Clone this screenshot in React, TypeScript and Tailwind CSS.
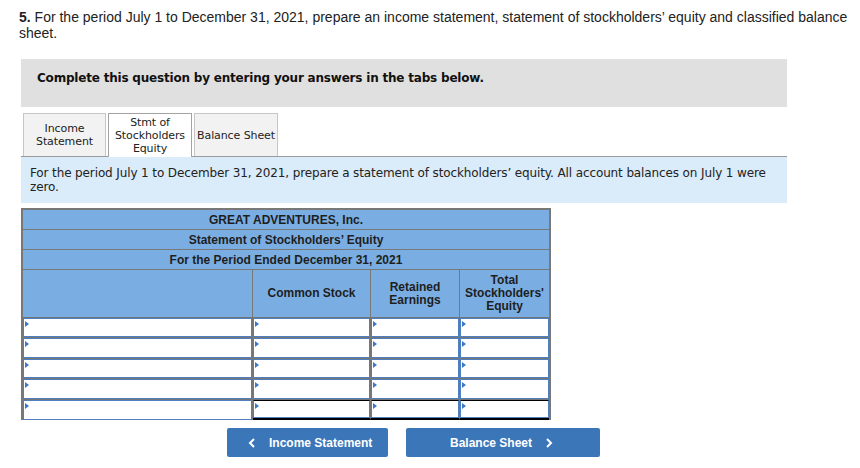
import React from "react";

const tahoma = { fontFamily: '"DejaVu Sans", Verdana, sans-serif' };
const arial = { fontFamily: '"Liberation Sans", Arial, sans-serif' };

function Flag() {
  return (
    <span className="absolute left-[1px] top-[2px] w-0 h-0 border-y-[3px] border-y-transparent border-l-[4px] border-l-[#3b78c8]" />
  );
}

function DataRow({ h, last }: { h: string; last?: boolean }) {
  const cols = [0, 1, 2, 3];
  return (
    <div className={`grid grid-cols-[230px_118px_89px_1fr] bg-white ${h}`}>
      {cols.map((c) => {
        const total = last && c > 0;
        return (
          <div
            key={c}
            className={`flex ${c < 3 ? "border-r border-r-[#767676]" : ""} ${
              last ? (total ? "border-b-2 border-b-black" : "") : "border-b border-b-[#767676]"
            }`}
          >
            <div
              className={`relative flex-1 border border-[#4f7fbf] ${total ? "border-t-black" : ""}`}
            >
              <Flag />
            </div>
          </div>
        );
      })}
    </div>
  );
}

export default function App() {
  return (
    <div className="w-[860px] h-[468px] bg-white overflow-hidden text-[#222]">
      <p className="pl-[19px] pt-[9px] pr-[4px] text-[14px] leading-[16px]" style={arial}>
        <b className="font-bold">5.</b> For the period July 1 to December 31, 2021, prepare an income statement, statement of stockholders’ equity and classified balance sheet.
      </p>

      <div className="ml-[21px] mt-[18px] w-[766px] h-[48px] bg-[#e0e0e0] pl-[16px] pt-[11px]">
        <p className="text-[12px] leading-[16px] font-bold text-[#111] tracking-[-0.2px]" style={tahoma}>
          Complete this question by entering your answers in the tabs below.
        </p>
      </div>

      <div className="ml-[21px] mt-[6px] w-[766px] flex items-end gap-[2px] pl-[2px] border-b border-b-[#9a9a9a] h-[44px]" style={tahoma}>
        <div className="w-[83px] h-[43px] bg-[#f2f2f2] border border-[#c6c6c6] border-b-0 flex items-center justify-center text-center text-[11px] leading-[13px] text-[#222] tracking-[-0.1px]">
          Income<br />Statement
        </div>
        <div className="w-[84px] h-[44px] -mb-px bg-white border border-[#a3a3a3] border-b-0 flex items-center justify-center text-center text-[11px] leading-[13px] text-[#222] tracking-[-0.1px]">
          Stmt of<br />Stockholders<br />Equity
        </div>
        <div className="w-[84px] h-[43px] bg-[#f2f2f2] border border-[#c6c6c6] border-b-0 flex items-center justify-center text-center text-[11px] leading-[13px] text-[#222] tracking-[-0.1px]">
          Balance Sheet
        </div>
      </div>

      <div className="ml-[21px] w-[766px] h-[46px] bg-[#daebf9] pl-[9px] pt-[9px] pr-[4px]">
        <p className="text-[12px] leading-[14px] text-[#222] tracking-[-0.12px]" style={tahoma}>
          For the period July 1 to December 31, 2021, prepare a statement of stockholders’ equity. All account balances on July 1 were zero.
        </p>
      </div>

      <div className="ml-[21px] mt-[5px] w-[530px] border-2 border-[#787878] border-b-0 bg-[#7aaee3]" style={arial}>
        <div className="h-[20px] border-b border-b-[#787878] flex items-center justify-center text-[12px] font-bold text-[#1e1e1e]">
          GREAT ADVENTURES, Inc.
        </div>
        <div className="h-[20px] border-b border-b-[#787878] flex items-center justify-center text-[12px] font-bold text-[#1e1e1e]">
          Statement of Stockholders’ Equity
        </div>
        <div className="h-[20px] border-b border-b-[#787878] flex items-center justify-center text-[12px] font-bold text-[#1e1e1e]">
          For the Period Ended December 31, 2021
        </div>
        <div className="grid grid-cols-[230px_118px_89px_1fr] h-[47px] text-[12px] leading-[13px] font-bold text-[#1e1e1e] text-center">
          <div className="border-r border-r-[#787878]" />
          <div className="border-r border-r-[#787878] flex items-center justify-center">Common Stock</div>
          <div className="border-r border-r-[#787878] flex items-center justify-center">Retained<br />Earnings</div>
          <div className="flex items-center justify-center">Total<br />Stockholders'<br />Equity</div>
        </div>
        <div className="border-t border-t-[#767676]">
          <DataRow h="h-[20px]" />
          <DataRow h="h-[21px]" />
          <DataRow h="h-[20px]" />
          <DataRow h="h-[21px]" />
          <DataRow h="h-[20px]" last />
        </div>
      </div>

      <div className="ml-[227px] mt-[8px] flex gap-[18px]" style={arial}>
        <button className="w-[161px] h-[29px] bg-[#3b76b9] rounded-[2px] flex items-center text-white text-[12px] font-bold pl-[21px]">
          <svg width="8" height="10" viewBox="0 0 8 10" className="mr-[13px]">
            <polyline points="6,1 2,5 6,9" fill="none" stroke="white" strokeWidth="2" />
          </svg>
          Income Statement
        </button>
        <button className="w-[194px] h-[29px] bg-[#3b76b9] rounded-[2px] flex items-center text-white text-[12px] font-bold pl-[44px]">
          Balance Sheet
          <svg width="8" height="10" viewBox="0 0 8 10" className="ml-[13px]">
            <polyline points="2,1 6,5 2,9" fill="none" stroke="white" strokeWidth="2" />
          </svg>
        </button>
      </div>
    </div>
  );
}
